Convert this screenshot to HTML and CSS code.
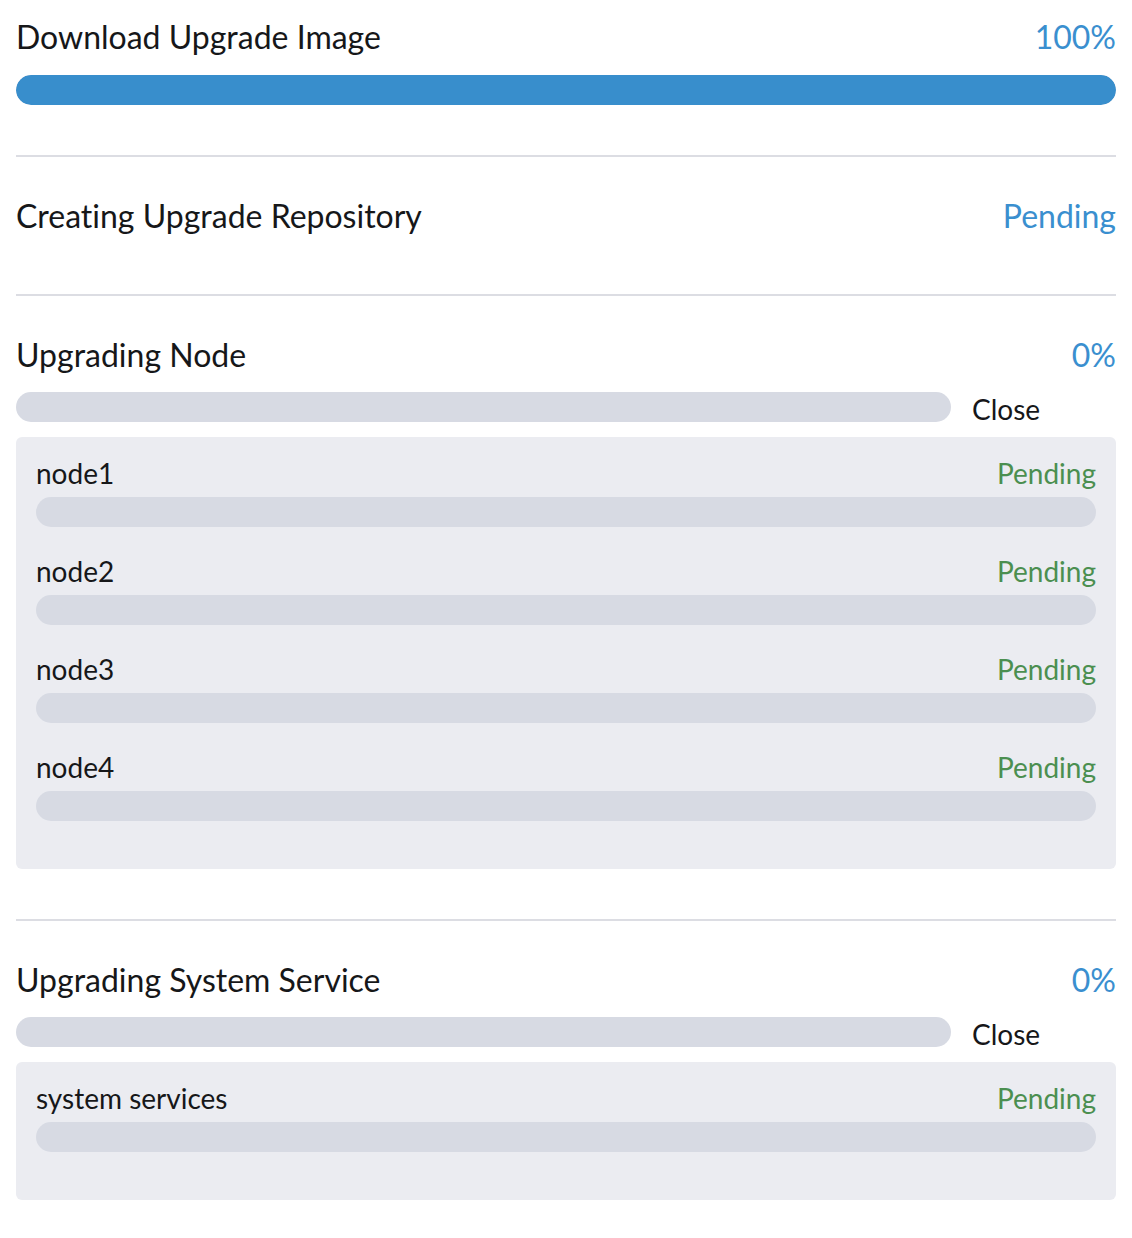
FILE: index.html
```html
<!DOCTYPE html>
<html>
<head>
<meta charset="utf-8">
<link rel="stylesheet" href="styles.css">
</head>
<body>
<div class="page">
  <section class="step step-first">
    <div class="head"><span class="title">Download Upgrade Image</span><span class="pct">100%</span></div>
    <div class="bar bar-top"><div class="fill" style="width:100%"></div></div>
  </section>
  <hr class="sep">
  <section class="step step-plain">
    <div class="head"><span class="title">Creating Upgrade Repository</span><span class="pct">Pending</span></div>
  </section>
  <hr class="sep">
  <section class="step">
    <div class="head"><span class="title">Upgrading Node</span><span class="pct">0%</span></div>
    <div class="barrow">
      <div class="bar bar-main"></div>
      <span class="close">Close</span>
    </div>
    <div class="panel">
      <div class="item"><div class="ihead"><span class="iname">node1</span><span class="istat">Pending</span></div><div class="bar"></div></div>
      <div class="item"><div class="ihead"><span class="iname">node2</span><span class="istat">Pending</span></div><div class="bar"></div></div>
      <div class="item"><div class="ihead"><span class="iname">node3</span><span class="istat">Pending</span></div><div class="bar"></div></div>
      <div class="item"><div class="ihead"><span class="iname">node4</span><span class="istat">Pending</span></div><div class="bar"></div></div>
    </div>
  </section>
  <hr class="sep">
  <section class="step">
    <div class="head"><span class="title">Upgrading System Service</span><span class="pct">0%</span></div>
    <div class="barrow">
      <div class="bar bar-main"></div>
      <span class="close">Close</span>
    </div>
    <div class="panel">
      <div class="item"><div class="ihead"><span class="iname">system services</span><span class="istat">Pending</span></div><div class="bar"></div></div>
    </div>
  </section>
</div>
</body>
</html>
```

FILE: styles.css
```css
* { box-sizing: border-box; }
html, body { margin: 0; padding: 0; background: #ffffff; }
body {
  font-family: Lato, "Open Sans", "Liberation Sans", sans-serif;
  font-variant-ligatures: none;
  color: #161719;
}
.page {
  width: 1132px;
  padding: 16px 16px 0 16px;
}
.step { padding-top: 38px; }
.step-first { padding-top: 0; padding-bottom: 50px; }
.step-plain { padding-bottom: 57px; }
.head {
  display: flex;
  justify-content: space-between;
  align-items: center;
  height: 42px;
  font-size: 32px;
  line-height: 42px;
}
.pct { color: #3a8fcf; }
.bar {
  height: 30px;
  border-radius: 15px;
  background: #d7dae3;
  overflow: hidden;
}
.fill { height: 100%; background: #388ecc; border-radius: 15px; }
.bar-top { margin-top: 17px; }
.sep {
  margin: 0;
  border: 0;
  height: 2px;
  background: #dcdde3;
}
.barrow {
  display: flex;
  align-items: flex-start;
  margin-top: 16px;
}
.bar-main { width: 85%; flex: none; }
.close {
  padding-left: 21px;
  padding-top: 2px;
  font-size: 28px;
  line-height: 30px;
}
.panel {
  margin-top: 13px;
  margin-bottom: 50px;
  background: #ebecf1;
  border-radius: 6px;
  padding: 19px 20px 48px 20px;
}
.item + .item { margin-top: 27px; }
.ihead {
  display: flex;
  justify-content: space-between;
  font-size: 28px;
  line-height: 34px;
  margin-bottom: 7px;
}
.istat { color: #4b8f50; }
```
